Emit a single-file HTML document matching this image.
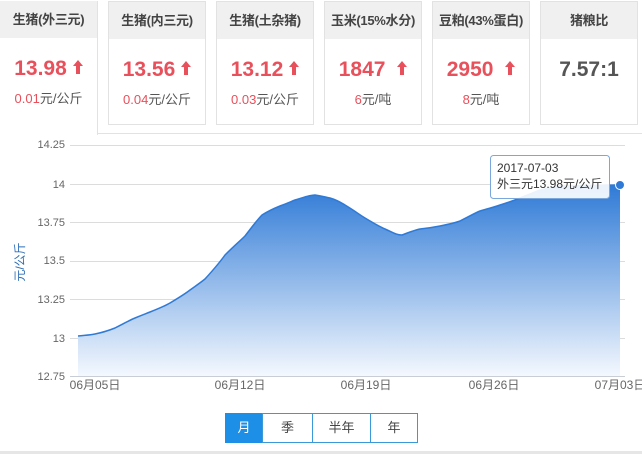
<!DOCTYPE html>
<html><head><meta charset="utf-8"><style>
*{margin:0;padding:0;box-sizing:border-box}
body{width:642px;height:454px;background:#fff;font-family:"Liberation Sans","Noto Sans CJK SC",sans-serif;position:relative;overflow:hidden}
.card{position:absolute;top:1px;width:98px;height:124px;border:1px solid #e2e2e2;background:#fff;text-align:center}
.card .h{height:37px;background:#f0f0f0;line-height:37px;font-size:13px;color:#444;font-weight:bold;white-space:nowrap;letter-spacing:-0.3px}
.card .v{margin-top:17px;font-size:21px;font-weight:bold;color:#e8505b;height:28px;line-height:28px}
.card .v.g{color:#555}
.card .s{font-size:13px;color:#555;margin-top:5px}
.card .s b{font-weight:normal;color:#e8505b}
.arr{display:inline-block;vertical-align:middle;margin-left:6px;margin-top:-4px}
.btn{position:absolute;top:413px;height:30px;border:1px solid #3a9ad9;line-height:28px;text-align:center;font-size:13px;color:#444;background:#fff}
</style></head><body>
<div style="position:absolute;left:98px;top:133px;width:544px;height:1px;background:#e2e2e2"></div>
<div class="card" style="left:0;height:134px;border-bottom:none;border-top:none;border-left:none;top:1px"><div class="h">生猪(外三元)</div><div class="v">13.98<svg class="arr" width="10" height="14" viewBox="0 0 10 14"><path d="M5 0L10 6H7V14H3V6H0Z" fill="#e8505b"/></svg></div><div class="s"><b>0.01</b>元/公斤</div></div>
<div class="card" style="left:108px"><div class="h">生猪(内三元)</div><div class="v">13.56<svg class="arr" width="10" height="14" viewBox="0 0 10 14"><path d="M5 0L10 6H7V14H3V6H0Z" fill="#e8505b"/></svg></div><div class="s"><b>0.04</b>元/公斤</div></div>
<div class="card" style="left:216px"><div class="h">生猪(土杂猪)</div><div class="v">13.12<svg class="arr" width="10" height="14" viewBox="0 0 10 14"><path d="M5 0L10 6H7V14H3V6H0Z" fill="#e8505b"/></svg></div><div class="s"><b>0.03</b>元/公斤</div></div>
<div class="card" style="left:324px"><div class="h">玉米(15%水分)</div><div class="v">1847 <svg class="arr" width="10" height="14" viewBox="0 0 10 14"><path d="M5 0L10 6H7V14H3V6H0Z" fill="#e8505b"/></svg></div><div class="s"><b>6</b>元/吨</div></div>
<div class="card" style="left:432px"><div class="h">豆粕(43%蛋白)</div><div class="v">2950 <svg class="arr" width="10" height="14" viewBox="0 0 10 14"><path d="M5 0L10 6H7V14H3V6H0Z" fill="#e8505b"/></svg></div><div class="s"><b>8</b>元/吨</div></div>
<div class="card" style="left:540px"><div class="h">猪粮比</div><div class="v g">7.57:1</div></div>

<svg style="position:absolute;left:0;top:134px" width="642" height="260" viewBox="0 134 642 260" font-family="Liberation Sans, Noto Sans CJK SC, sans-serif" font-size="11" fill="#666">
<defs><linearGradient id="g" x1="0" y1="0" x2="0" y2="1" gradientUnits="objectBoundingBox"><stop offset="0" stop-color="#2f7ad6"/><stop offset="1" stop-color="#f4f8fe"/></linearGradient></defs>
<g stroke="#dcdcdc" stroke-width="1">
<line x1="70" y1="145.5" x2="625" y2="145.5"/><line x1="70" y1="184.5" x2="625" y2="184.5"/><line x1="70" y1="222.5" x2="625" y2="222.5"/><line x1="70" y1="261.5" x2="625" y2="261.5"/><line x1="70" y1="299.5" x2="625" y2="299.5"/><line x1="70" y1="338.5" x2="625" y2="338.5"/>
</g>
<path d="M78 336 C88 335 90 335 95 334 C105 332 110 330 115 328 C125 323 130 320 135 318 C142 315 145 314 150 312 C160 308 165 306 170 303 C180 297 185 294 190 290 C197 285 200 283 205 279 C215 268 220 262 225 255 C235 245 240 241 245 236 C252 227 257 220 262 215 C270 210 275 208 280 206 C288 203 290 202 295 200 C305 197 310 195 315 195 C322 196 325 197 330 198 C337 200 340 202 345 205 C355 211 360 215 365 218 C375 224 380 227 385 229 C392 232 396 235 402 235 C410 232 415 230 420 229 C430 228 435 227 440 226 C450 224 455 223 460 221 C470 216 475 213 480 211 C490 208 495 207 500 205 C510 202 515 200 520 198 C530 194 535 192 540 190 C550 188 555 186 560 186 L620 185 L620 376 L78 376 Z" fill="url(#g)"/>
<path d="M78 336 C88 335 90 335 95 334 C105 332 110 330 115 328 C125 323 130 320 135 318 C142 315 145 314 150 312 C160 308 165 306 170 303 C180 297 185 294 190 290 C197 285 200 283 205 279 C215 268 220 262 225 255 C235 245 240 241 245 236 C252 227 257 220 262 215 C270 210 275 208 280 206 C288 203 290 202 295 200 C305 197 310 195 315 195 C322 196 325 197 330 198 C337 200 340 202 345 205 C355 211 360 215 365 218 C375 224 380 227 385 229 C392 232 396 235 402 235 C410 232 415 230 420 229 C430 228 435 227 440 226 C450 224 455 223 460 221 C470 216 475 213 480 211 C490 208 495 207 500 205 C510 202 515 200 520 198 C530 194 535 192 540 190 C550 188 555 186 560 186 L620 185" fill="none" stroke="#2f7ad6" stroke-width="1.5"/>
<line x1="70" y1="376.5" x2="625" y2="376.5" stroke="#c8cdd6"/>
<g text-anchor="end"><text x="65" y="148">14.25</text><text x="65" y="188">14</text><text x="65" y="226">13.75</text><text x="65" y="264">13.5</text><text x="65" y="303">13.25</text><text x="65" y="342">13</text><text x="65" y="380">12.75</text></g>
<g text-anchor="middle" font-size="12"><text x="95" y="389">06月05日</text><text x="240" y="389">06月12日</text><text x="366" y="389">06月19日</text><text x="494" y="389">06月26日</text><text x="620" y="389">07月03日</text></g>
<text transform="translate(24,262) rotate(-90)" text-anchor="middle" font-size="12" fill="#2f6fb8">元/公斤</text>
<rect x="490.5" y="155.5" width="119" height="43" rx="3" fill="#fff" fill-opacity="0.9" stroke="#7aa7dc"/>
<text x="497" y="172" font-size="12" fill="#333">2017-07-03</text>
<text x="497" y="188" font-size="12" fill="#333">外三元13.98元/公斤</text>
<circle cx="620" cy="185" r="4.5" fill="#2f7ad6" stroke="#fff" stroke-width="1"/>
</svg>

<div class="btn" style="left:225px;width:38px;background:#1e8fe6;color:#fff;border-color:#1e8fe6">月</div>
<div class="btn" style="left:262px;width:51px">季</div>
<div class="btn" style="left:312px;width:59px">半年</div>
<div class="btn" style="left:370px;width:48px">年</div>
<div style="position:absolute;left:0;top:451px;width:642px;height:3px;background:#e6e6e6"></div>
</body></html>
